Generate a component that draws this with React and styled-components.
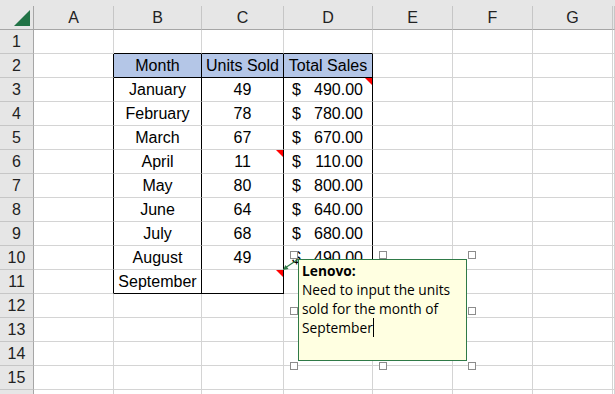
import React from 'react';
import styled, { createGlobalStyle } from 'styled-components';

const GlobalStyle = createGlobalStyle`
  html, body { margin: 0; padding: 0; overflow: hidden; background: #ffffff; }
  body { font-family: "Liberation Sans", Arial, sans-serif; }
`;

const GRID = '#d4d4d4';
const HEAD_BG = '#e6e6e6';
const HEAD_SEP = '#c6c6c6';
const HEAD_EDGE = '#a6a6a6';
const BLACK = '#000000';

const Wrapper = styled.div`
  position: relative;
  width: 615px;
  height: 394px;
  overflow: hidden;
`;

const Sheet = styled.div`
  display: grid;
  grid-template-columns: 34px 80px 88px 82px 89px 80px 80px 80px 1fr;
  grid-template-rows: 6px repeat(17, 24px);
  width: 615px;
  font-size: 16px;
  color: #000;
`;

const TopStrip = styled.div`
  grid-column: 1 / -1;
  background: ${HEAD_BG};
`;

const Corner = styled.div`
  background: ${HEAD_BG};
  border-right: 1px solid ${HEAD_EDGE};
  border-bottom: 1px solid ${HEAD_EDGE};
  box-sizing: border-box;
  display: flex;
  align-items: flex-start;
  justify-content: flex-end;
  padding: 4px 2px 0 0;
`;

const ColHeader = styled.div`
  background: ${HEAD_BG};
  border-right: 1px solid ${HEAD_SEP};
  border-bottom: 1px solid ${HEAD_EDGE};
  box-sizing: border-box;
  text-align: center;
  line-height: 23px;
  color: #222;
`;

const RowHeader = styled.div`
  background: ${HEAD_BG};
  border-right: 1px solid ${HEAD_EDGE};
  border-bottom: 1px solid ${HEAD_SEP};
  box-sizing: border-box;
  text-align: center;
  line-height: 23px;
  color: #222;
`;

const Cell = styled.div`
  position: relative;
  box-sizing: border-box;
  border-right: 1px solid ${(p) => p.$right || GRID};
  border-bottom: 1px solid ${(p) => p.$bottom || GRID};
  background: ${(p) => p.$bg || '#ffffff'};
  line-height: 23px;
  white-space: nowrap;
  display: flex;
  justify-content: ${(p) => (p.$money ? 'space-between' : 'center')};
  padding: ${(p) => (p.$money ? '0 9px 0 8px' : '0')};
`;

const NoteMark = styled.span`
  position: absolute;
  top: 0;
  right: 0;
  width: 7px;
  height: 7px;
  background: #ff0000;
  clip-path: polygon(0 0, 100% 0, 100% 100%);
`;

const CommentBox = styled.div`
  position: absolute;
  left: 298px;
  top: 259px;
  width: 169px;
  height: 102px;
  box-sizing: border-box;
  border: 1px solid #2f7a47;
  background: #ffffe1;
  padding: 1px 4px 0 3px;
  font-family: "Open Sans", "Liberation Sans", sans-serif;
  font-size: 13.75px;
  line-height: 19px;
  color: #000;
`;

const Author = styled.div`
  font-weight: 700;
`;

const Caret = styled.span`
  display: inline-block;
  width: 1px;
  height: 19px;
  background: #000;
  vertical-align: -4px;
`;

const Handle = styled.span`
  position: absolute;
  width: 8px;
  height: 8px;
  box-sizing: border-box;
  border: 1px solid #8c8c8c;
  background: #ffffff;
`;

const Connector = styled.svg`
  position: absolute;
  left: 280px;
  top: 254px;
  overflow: visible;
`;

const columns = ['A', 'B', 'C', 'D', 'E', 'F', 'G', ''];

const data = [
  ['January', 49, '490.00'],
  ['February', 78, '780.00'],
  ['March', 67, '670.00'],
  ['April', 11, '110.00'],
  ['May', 80, '800.00'],
  ['June', 64, '640.00'],
  ['July', 68, '680.00'],
  ['August', 49, '490.00'],
  ['September', '', ''],
];

const notes = new Set(['3-3', '6-2', '11-2']);

function cellContent(row, col) {
  if (row === 2) {
    if (col === 1) return { text: 'Month', bg: '#b4c6e7' };
    if (col === 2) return { text: 'Units Sold', bg: '#b4c6e7' };
    if (col === 3) return { text: 'Total Sales', bg: '#b4c6e7' };
  }
  if (row >= 3 && row <= 11) {
    const d = data[row - 3];
    if (col === 1) return { text: d[0] };
    if (col === 2) return { text: String(d[1]) };
    if (col === 3 && d[2]) return { money: d[2] };
  }
  return {};
}

function borders(row, col) {
  let right;
  let bottom;
  if (row >= 2 && row <= 11 && col >= 0 && col <= 3) right = BLACK;
  if ((row === 1 || row === 2) && col >= 1 && col <= 3) bottom = BLACK;
  if (row === 11 && (col === 1 || col === 2)) bottom = BLACK;
  return { right, bottom };
}

const handleXs = [290, 379, 468];
const handleYs = [251, 307, 362];

export default function App() {
  const rows = [];
  for (let r = 1; r <= 16; r++) {
    rows.push(<RowHeader key={`rh-${r}`}>{r <= 15 ? r : ''}</RowHeader>);
    columns.forEach((_, c) => {
      const content = cellContent(r, c);
      const b = borders(r, c);
      rows.push(
        <Cell
          key={`c-${r}-${c}`}
          $right={b.right}
          $bottom={b.bottom}
          $bg={content.bg}
          $money={!!content.money}
        >
          {content.money ? (
            <>
              <span>$</span>
              <span>{content.money}</span>
            </>
          ) : (
            content.text
          )}
          {notes.has(`${r}-${c}`) && <NoteMark />}
        </Cell>
      );
    });
  }

  const handles = [];
  handleYs.forEach((y, yi) =>
    handleXs.forEach((x, xi) => {
      if (yi === 1 && xi === 1) return;
      handles.push(<Handle key={`h-${x}-${y}`} style={{ left: x, top: y }} />);
    })
  );

  return (
    <>
      <GlobalStyle />
      <Wrapper>
        <Sheet>
          <TopStrip />
          <Corner>
            <svg width="17" height="16" viewBox="0 0 17 16">
              <polygon points="16,0 16,16 0,16" fill="#217346" />
            </svg>
          </Corner>
          {columns.map((c, i) => (
            <ColHeader key={`ch-${i}`}>{c}</ColHeader>
          ))}
          {rows}
        </Sheet>
        <Connector width="22" height="20" viewBox="0 0 22 20">
          <line x1="5" y1="14" x2="18.5" y2="5" stroke="#2f7a47" strokeWidth="1.2" />
          <polygon points="3,16 8.5,14.9 5.4,10.9" fill="#2f7a47" />
        </Connector>
        <CommentBox>
          <Author>Lenovo:</Author>
          Need to input the units sold for the month of September
          <Caret />
        </CommentBox>
        {handles}
      </Wrapper>
    </>
  );
}
